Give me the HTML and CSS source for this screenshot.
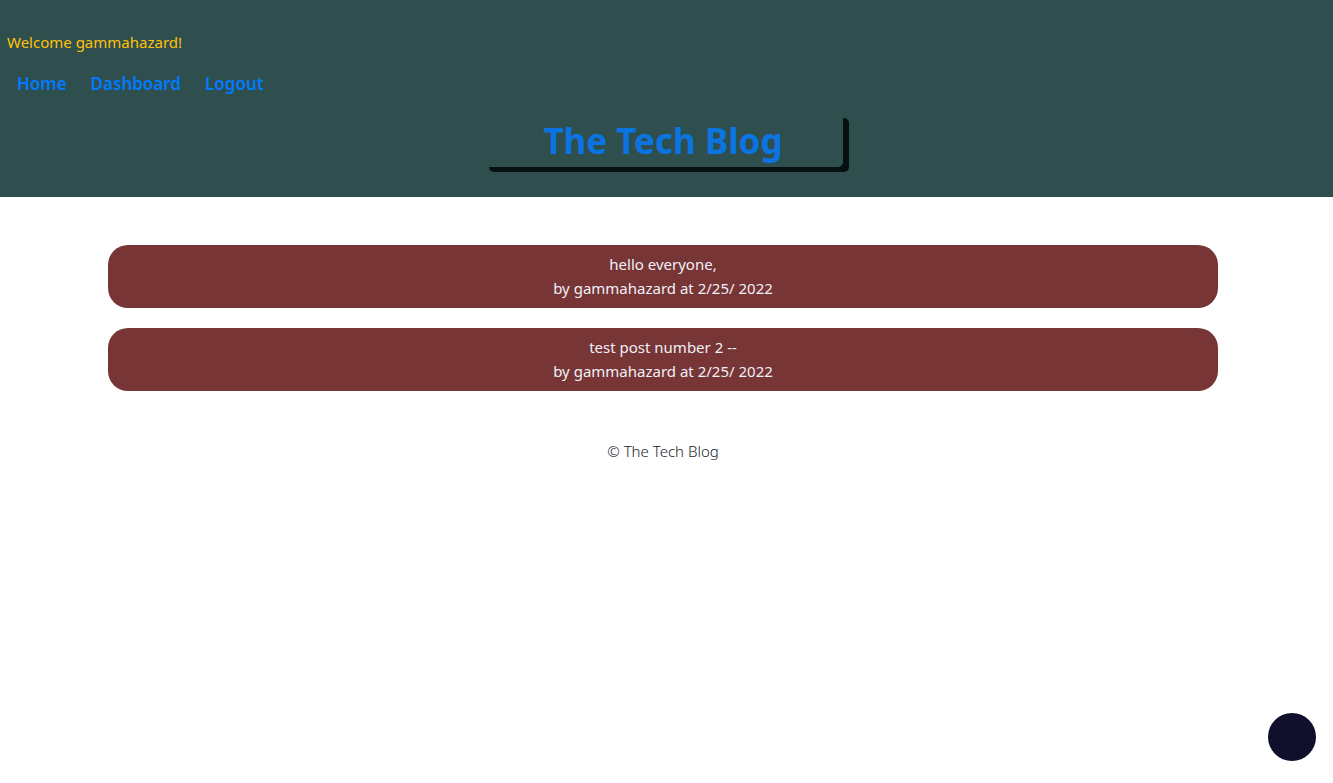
FILE: index.html
```html
<!DOCTYPE html>
<html lang="en">
<head>
<meta charset="utf-8">
<title>The Tech Blog</title>
<link rel="stylesheet" href="styles.css">
</head>
<body>
<header class="site-header">
  <p class="welcome">Welcome gammahazard!</p>
  <nav class="nav">
    <a href="#">Home</a>
    <a href="#">Dashboard</a>
    <a href="#">Logout</a>
  </nav>
  <h1 class="title"><a href="#">The Tech Blog</a></h1>
</header>
<main class="posts">
  <article class="post">
    <div>hello everyone,</div>
    <div>by gammahazard at 2/25/ 2022</div>
  </article>
  <article class="post">
    <div>test post number 2 --</div>
    <div>by gammahazard at 2/25/ 2022</div>
  </article>
</main>
<footer class="footer">© The Tech Blog</footer>
<button class="fab" type="button" aria-label="Open menu"></button>
</body>
</html>
```
FILE: styles.css
```css
* {
  box-sizing: border-box;
}

body {
  margin: 0;
  background: #fff;
  color: #212529;
  font-family: "Segoe UI", "Noto Sans", "Open Sans", sans-serif;
  font-size: 15px;
  line-height: 24px;
}

a {
  color: #007bff;
  text-decoration: none;
}

.site-header {
  padding: 30px 14px 30px 7px;
  background: #2f4f4f;
}

.welcome {
  margin: 0 0 16px;
  color: #ffc107;
}

.nav {
  display: flex;
  gap: 24px;
  padding: 0 10px;
  font-size: 17px;
  font-weight: 600;
  line-height: 27px;
}

.title {
  width: 360px;
  max-width: 100%;
  margin: 16px auto 0;
  padding-top: 2px;
  border-radius: 5px;
  box-shadow: 6px 5px #071010;
  font-size: 35px;
  font-weight: 700;
  line-height: 52px;
  text-align: center;
}

.title a {
  color: #0a74e0;
}

.posts {
  display: grid;
  gap: 20px;
  max-width: 1117px;
  margin: 0 auto;
  padding: 48px 7px 48px 0;
}

.post {
  padding: 7px 0 8px;
  border-radius: 20px;
  background: #773535;
  color: #f0f0f8;
  text-align: center;
}

.footer {
  padding-right: 7px;
  font-weight: 300;
  text-align: center;
}

.fab {
  position: fixed;
  right: 17px;
  bottom: 22px;
  width: 48px;
  height: 48px;
  padding: 0;
  border: 0;
  border-radius: 50%;
  background: #100f2c;
}
```
